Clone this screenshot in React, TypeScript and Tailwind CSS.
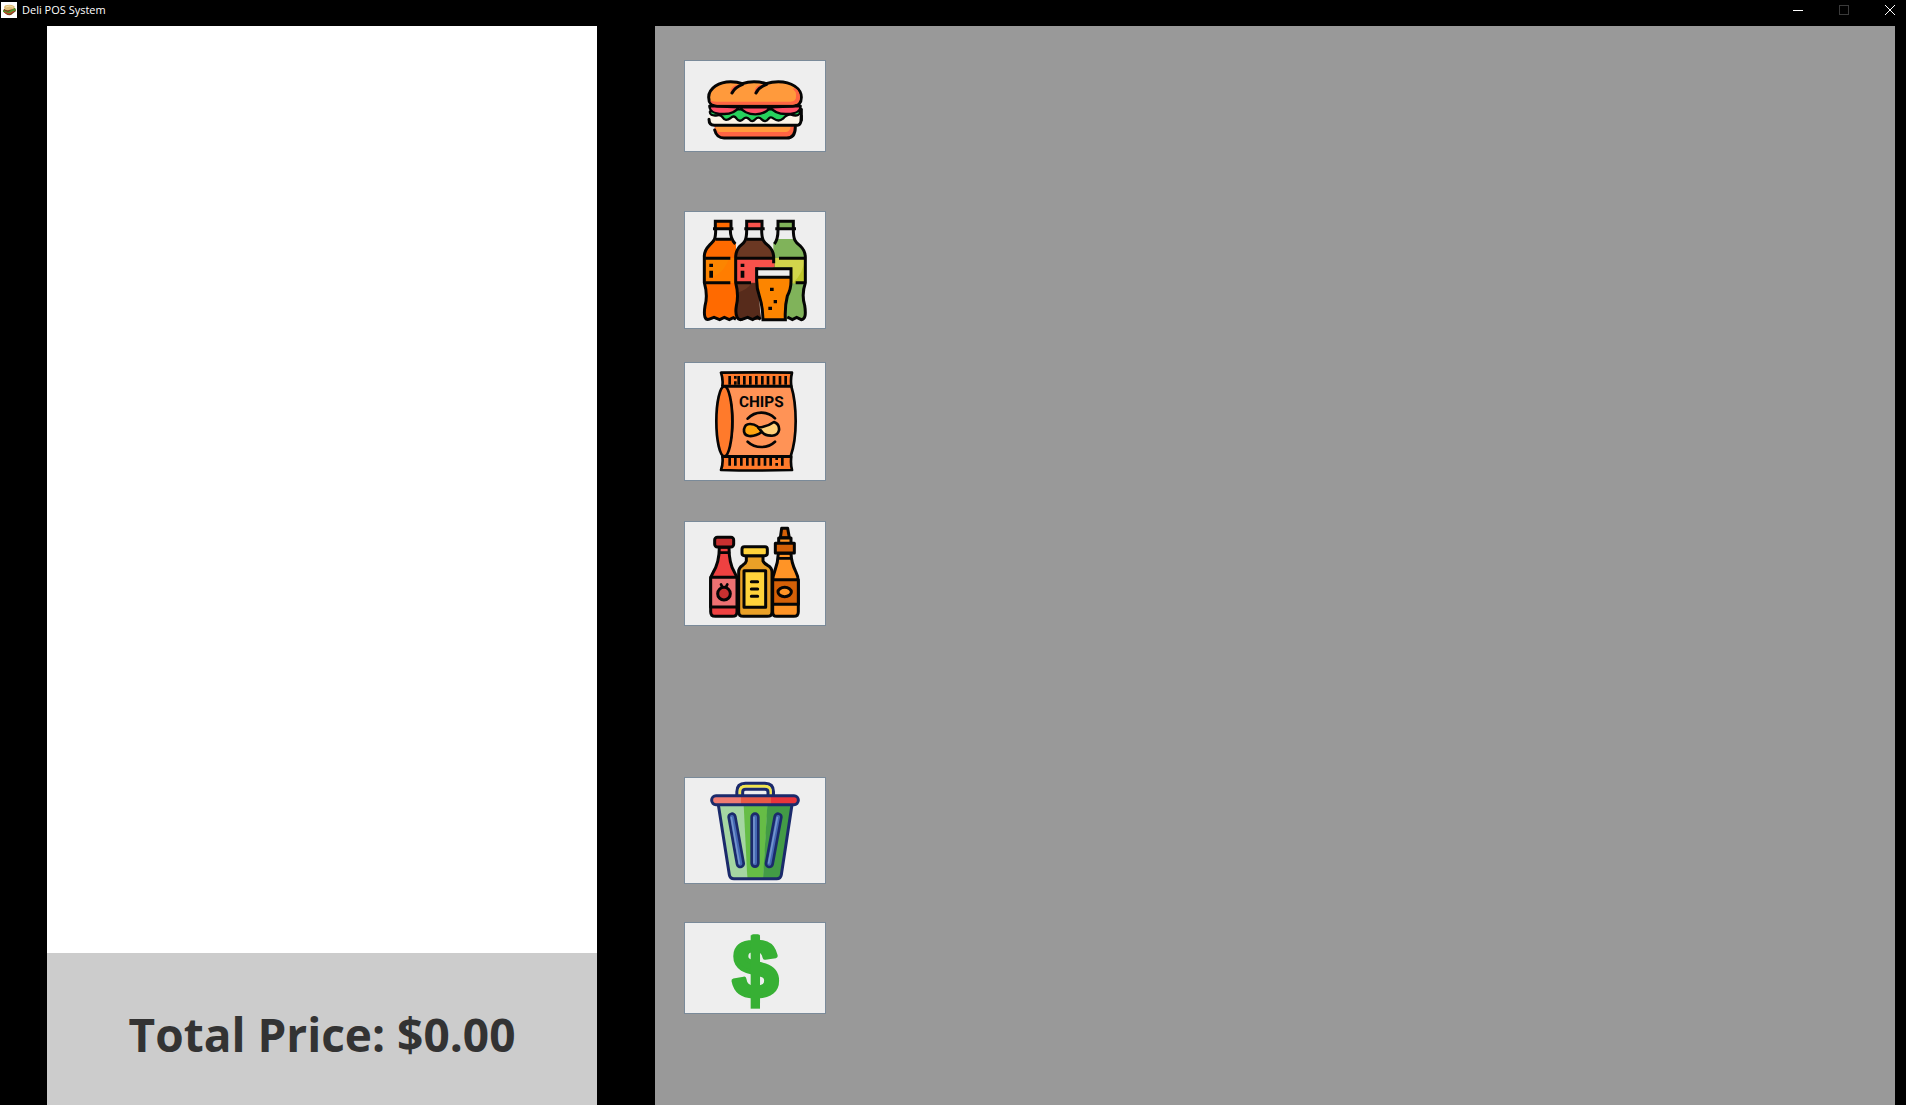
import type { ReactNode } from "react";

const INK = "#050505";
const NAVY = "#1b2a6b";

function SandwichIcon() {
  return (
    <svg viewBox="15 15 420 270" className="block h-[90px] w-full" aria-hidden="true">
      <g stroke={INK} strokeWidth="9" strokeLinecap="round" strokeLinejoin="round">
        <path d="M104 222C108 238 118 246 132 246H320C336 246 346 236 346 210H104Z" fill="#ff6443" stroke="none" />
        <path d="M106 210H332C331 222 326 228 314 228H120C112 228 107 220 106 210Z" fill="#ff9a3c" stroke="none" />
        <path d="M104 222C108 238 118 246 132 246H320C336 246 346 236 346 212" fill="none" />
        <path d="M87 178H364V194Q364 208 350 208H101Q87 208 87 192Z" fill="#fcf4e6" stroke="none" />
        <path d="M90 166C88 176 96 180 112 178Q121 174 128 184Q136 198 152 186Q162 176 170 188Q180 200 190 189Q198 180 208 190Q216 201 226 190Q235 180 245 190Q256 201 265 189Q272 180 281 188Q296 199 309 188Q321 174 333 176C352 182 362 176 360 166L330 160H120Z" fill="#27d15d" strokeWidth="7" />
        <path d="M87 190C87 202 91 208 103 208H348C360 208 364 202 364 180" fill="none" />
        <path d="M88 150C89 166 100 173 128 174C150 175 166 170 176 154Z" fill="#ff4f66" strokeWidth="7" />
        <path d="M362 150C361 166 350 173 322 174C300 175 282 170 272 154Z" fill="#ff4f66" strokeWidth="7" />
        <path d="M180 154Q194 174 226 175Q258 174 270 154Z" fill="#ff4f66" strokeWidth="7" />
        <path d="M364 160V192" fill="none" />
        <path d="M86 124C86 96 118 77 152 77Q172 77 187 83Q203 77 222 77Q242 77 258 83Q276 77 295 77C334 77 364 97 364 124Q364 150 338 150H112Q86 150 86 124Z" fill="#ff9a3c" />
        <path d="M90 132Q96 138 114 137H332Q350 135 348 118Q350 108 338 98Q345 94 353 103Q360 114 360 124Q360 146 338 146H112Q92 146 90 132Z" fill="#ff6443" stroke="none" />
        <path d="M186 86Q152 84 151 110L158 111Q165 97 187 86Z" fill="#ff6443" stroke="none" />
        <path d="M258 86Q224 84 223 110L230 111Q237 97 259 86Z" fill="#ff6443" stroke="none" />
        <path d="M156 111Q165 93 188 85M228 111Q237 93 260 85" fill="none" />
      </g>
    </svg>
  );
}

function DrinksIcon() {
  return (
    <svg viewBox="15 18 420 348" className="block h-[116px] w-full" aria-hidden="true">
      <path d="M107 68H152V94L168 114V340L160 334L148 343L133 333L119 343L102 333L86 342Q70 336 74 306Q84 268 76 232L74 152Q78 124 98 110Q107 100 107 90Z" fill="#ff6a00" />
      <rect x="76" y="156" width="90" height="74" fill="#fc8500" />
      <path d="M148 156H166V230H76V218Q128 212 148 156Z" fill="#ff7d00" />
      <path d="M294 68H341V94Q344 110 358 120Q376 132 376 152L371 236Q366 262 376 302Q380 340 364 342L350 334L338 340L318 340L316 250L280 184V112Q294 100 294 90Z" fill="#80b35a" />
      <path d="M284 156H374V232H336V184H284Z" fill="#d2d54b" />
      <path d="M374 156V232H338Q372 200 374 156Z" fill="#bfc62b" />
      <path d="M200 68H246V94Q250 110 266 120Q284 132 283 152V184H236L240 340L218 342L203 333L188 343Q168 346 168 306Q176 268 168 232V152Q170 128 190 114Q200 104 200 90Z" fill="#6b3823" />
      <path d="M168 156H283V184H226V230H168Z" fill="#f9524b" />
      <path d="M172 260Q202 252 214 232H228L244 340L218 342L203 333L188 343Q168 346 168 306Z" fill="#572b1b" />
      <g fill="#eee">
        <rect x="107" y="72" width="46" height="26" />
        <rect x="200" y="72" width="46" height="26" />
        <rect x="294" y="72" width="47" height="27" />
      </g>
      <g stroke={INK} strokeWidth="9" fill="none">
        <path d="M106 68V46H153V68" fill="#ff6a00" />
        <path d="M200 68V46H246V68" fill="#f9524b" />
        <path d="M294 68V46H340V68" fill="#80b35a" />
        <path d="M99 68H160M193 68H254M286 68H348" />
        <path d="M107 72C107 104 100 106 88 118Q72 134 73 154V230Q84 268 75 300C70 332 76 342 86 340L102 334L119 341L133 334L148 341L160 335L168 340" />
        <path d="M151 72Q151 98 166 114" />
        <path d="M200 72C200 106 192 110 180 120Q167 134 167 154V230Q177 268 169 300C164 332 174 344 186 340L203 334L218 341L232 333L242 340" />
        <path d="M245 72C245 106 254 110 266 120Q281 134 281 154V172" />
        <path d="M294 72Q294 100 283 114" />
        <path d="M340 72C340 106 349 110 361 120Q376 134 376 154V230Q364 266 374 298C379 330 374 340 364 341L350 334L337 341L322 333" />
        <path d="M107 100H153M200 100H247M76 157H151M170 157H281M297 157H374M76 230H151M170 230H213M347 230H374" />
      </g>
      <path d="M230 188H333V222Q334 248 322 270Q314 300 316 341H249Q248 300 238 270Q230 248 230 222Z" fill="#fc8500" />
      <path d="M230 188H333V214H230Z" fill="#eeeded" />
      <path d="M230 188H333V222Q334 248 322 270Q314 300 316 341H249Q248 300 238 270Q230 248 230 222ZM230 214H333" fill="none" stroke={INK} strokeWidth="9" />
      <path d="M88 173H99V183H88ZM88 194H99V215H88ZM182 173H193V183H182ZM182 194H193V215H182ZM270 245H281V255H270ZM281 282H291V292H281ZM265 302H276V312H265Z" fill={INK} />
    </svg>
  );
}

function ChipsIcon() {
  return (
    <svg viewBox="15 15 420 351" className="block h-[117px] w-full" aria-hidden="true">
      <g stroke={INK} strokeWidth="8" strokeLinejoin="round" strokeLinecap="round">
        <path d="M123 44Q230 42 336 44Q331 64 334 84H127Q130 64 123 44Z" fill="#ff7a2b" />
        <path d="M127 296H334Q331 316 336 336Q230 339 123 336Q130 316 127 296Z" fill="#ff7a2b" />
        <path d="M132 85H334Q347 128 347 190Q347 252 332 295H132Q157 260 157 190Q157 120 132 85Z" fill="#ff9356" />
        <ellipse cx="133" cy="190" rx="24" ry="105" fill="#ff7a2b" />
      </g>
      <g stroke={INK} strokeWidth="8" fill="none">
        <path d="M149 54V80M166 54V62M166 70V80M176 54V80M193 54V80M211 54V80M229 54V80M247 54V80M264 54V80M282 54V80M300 54V80M317 54V80" />
        <path d="M149 299V323M166 299V323M184 299V323M202 299V323M219 299V323M237 299V323M255 299V323M272 299V323M290 299V306M290 315V323M307 299V323" />
      </g>
      <text x="244" y="148" textAnchor="middle" fontFamily="Liberation Sans Narrow, Roboto, sans-serif" fontWeight="700" fontSize="46" textRendering="geometricPrecision" fill={INK}>CHIPS</text>
      <g stroke={INK} strokeWidth="8" strokeLinecap="round" strokeLinejoin="round">
        <path d="M203 182Q220 164 244 164Q268 164 285 181M203 251Q220 267 244 267Q268 267 285 251" fill="none" />
        <path d="M245 222Q226 236 207 234Q190 231 192 214Q195 197 211 198Q235 199 245 222Z" fill="#ffa50f" />
        <path d="M235 209Q263 206 282 192Q299 198 297 217Q293 235 272 233Q252 232 245 220Z" fill="#ffd079" />
      </g>
    </svg>
  );
}

function CondimentsIcon() {
  return (
    <svg viewBox="15 18 420 309" className="block h-[103px] w-full" aria-hidden="true">
      <g stroke={INK} strokeWidth="9" strokeLinejoin="round" strokeLinecap="round">
        <path d="M118 94H147Q147 144 164 170Q171 180 171 194V287Q171 301 157 301H106Q92 301 92 287V194Q92 180 99 170Q118 140 118 94Z" fill="#ee4141" />
        <path d="M92 184H171V273H92Z" fill="#ee7172" />
        <rect x="104" y="64" width="57" height="29" rx="8" fill="#c83030" />
        <path d="M119 110H147M123 205L128 215M142 205L137 215" fill="none" strokeWidth="8" />
        <circle cx="132" cy="233" r="19" fill="#c83030" />
        <path d="M199 119H249V135Q251 141 263 148Q276 155 276 168V287Q276 301 262 301H190Q176 301 176 287V168Q176 155 188 148Q198 141 199 135Z" fill="#e9a027" />
        <rect x="186" y="92" width="76" height="27" rx="7" fill="#ffd33b" />
        <rect x="192" y="164" width="65" height="110" fill="#ffd33b" />
        <path d="M214 197H233M214 219H233M214 241H233" fill="none" />
        <path d="M295 112H333Q334 140 347 166Q355 181 355 197V287Q355 301 341 301H290Q278 301 278 287V197Q278 181 284 166Q294 140 295 112Z" fill="#ff9426" />
        <path d="M278 191H355V265H278Z" fill="#d46007" />
        <path d="M305 37H323L328 65H301Z" fill="#d46007" />
        <path d="M296 66H333V84H296Z" fill="#ff9426" />
        <path d="M286 82H343V111H286Z" fill="#d46007" />
        <path d="M298 127H332" fill="none" strokeWidth="8" />
        <ellipse cx="314" cy="228" rx="20" ry="14" fill="#ff9426" />
      </g>
    </svg>
  );
}

function TrashIcon() {
  return (
    <svg viewBox="15 18 420 315" className="block h-[105px] w-full" aria-hidden="true">
      <path d="M171 72V59Q171 34 196 34H255Q280 34 280 59V72" fill="none" stroke={NAVY} strokeWidth="10" />
      <path d="M180 70V60Q180 43 197 43H254Q271 43 271 60V70" fill="none" stroke="#f0e44c" strokeWidth="9" />
      <path d="M188 70V60Q188 52 197 52H254Q264 52 264 60V70" fill="none" stroke={NAVY} strokeWidth="9" />
      <path d="M115 98H198L202 320H162Q150 320 148 308Z" fill="#a5d6a2" />
      <path d="M191 98H263L250 320H202Z" fill="#66bd46" />
      <path d="M262 98H336L304 308Q302 320 290 320H249Z" fill="#439b46" />
      <path d="M115 98L148 308Q150 320 162 320H290Q302 320 304 308L336 98" fill="none" stroke={NAVY} strokeWidth="9" />
      <path d="M111 71H181V98H111Q95 96 95 84Q95 71 111 71Z" fill="#f17c72" />
      <path d="M181 71H273V98H181Z" fill="#e95a46" />
      <path d="M273 71H341Q356 73 356 84Q356 96 341 98H273Z" fill="#ea353a" />
      <rect x="95" y="71" width="260" height="27" rx="13" fill="none" stroke={NAVY} strokeWidth="9" />
      <g strokeLinecap="round" fill="none">
        <path d="M156 135L181 275M225 135V274M294 135L268 275" stroke={NAVY} strokeWidth="28" />
        <path d="M156 135L181 275M225 135V274M294 135L268 275" stroke="#4569b4" strokeWidth="12" />
        <path d="M154 137L178 275M222 136V273M292 137L266 273" stroke="#7596cd" strokeWidth="5" />
      </g>
    </svg>
  );
}

function DollarIcon() {
  return (
    <svg viewBox="15 15 420 270" className="block h-[90px] w-full overflow-visible" aria-hidden="true">
      <text x="226" y="238" textAnchor="middle" fontFamily="Liberation Sans, sans-serif" fontWeight="700" fontSize="244" textRendering="geometricPrecision" fill="#37b034" stroke="#37b034" strokeWidth="14" strokeLinejoin="round">$</text>
      <path d="M212 52H240V272H212Z" fill="#37b034" />
    </svg>
  );
}

function AppIcon() {
  return (
    <svg viewBox="0 0 16 16" className="size-4" aria-hidden="true">
      <path d="M0 0H16V16H0Z" fill="#fff" />
      <path d="M2 9Q5 14 10 13L15 9L14 6L3 7Z" fill="#7b3f1c" />
      <path d="M2 8L7 10L14 6L15 8L9 12L2 10Z" fill="#4f9a2e" />
      <path d="M3 10L8 12L13 9" fill="none" stroke="#c8402b" />
      <path d="M3 6Q3 3 6 3Q10 2 13 4Q15 5 12 7L8 8Q4 9 3 6Z" fill="#dfbd76" />
      <path d="M5 5Q8 3 12 5" fill="none" stroke="#f1dca8" />
    </svg>
  );
}

function PosButton({ label, className, children }: { label: string; className: string; children: ReactNode }) {
  return (
    <button type="button" aria-label={label} className={`w-[142px] shrink-0 border border-[#7a8a99] bg-[#eeeeee] ${className}`}>
      {children}
    </button>
  );
}

export default function App() {
  return (
    <div className="flex min-h-screen flex-col bg-black font-['Open_Sans','Noto_Sans',sans-serif]">
      <header className="flex h-[26px] items-start justify-between text-white">
        <div className="flex items-center gap-[5px] pt-0.5 pl-px">
          <AppIcon />
          <h1 className="text-[11px] leading-4">Deli POS System</h1>
        </div>
        <div className="flex h-5 gap-[14px]">
          <button type="button" aria-label="Minimize" className="flex w-8 items-center justify-center">
            <svg viewBox="0 0 10 10" className="size-[10px]" shapeRendering="crispEdges"><path d="M0 5H10V6H0Z" fill="#fff" /></svg>
          </button>
          <button type="button" aria-label="Maximize" disabled className="flex w-8 items-center justify-center">
            <svg viewBox="0 0 10 10" className="size-[10px]" shapeRendering="crispEdges"><path d="M0 0H10V10H0ZM1 1V9H9V1Z" fill="#3a3a3a" fillRule="evenodd" /></svg>
          </button>
          <button type="button" aria-label="Close" className="flex w-8 items-center justify-center">
            <svg viewBox="0 0 10 10" className="size-[10px]"><path d="M0 0L10 10M10 0L0 10" stroke="#fff" fill="none" /></svg>
          </button>
        </div>
      </header>
      <div className="flex flex-1 gap-[58px] pr-[11px] pl-[47px]">
        <section aria-label="Order" className="flex flex-[550] flex-col bg-white">
          <div className="flex-1" />
          <div className="flex h-[152px] items-center justify-center bg-[#cccccc] pt-2.5">
            <p className="text-[46px] leading-none font-bold whitespace-nowrap text-[#333333]">Total Price: $0.00</p>
          </div>
        </section>
        <main className="flex-[1240] bg-[#999999]">
          <div className="flex flex-col items-start pt-[34px] pl-[29px]">
            <PosButton label="Sandwiches" className=""><SandwichIcon /></PosButton>
            <PosButton label="Drinks" className="mt-[59px]"><DrinksIcon /></PosButton>
            <PosButton label="Chips" className="mt-[33px]"><ChipsIcon /></PosButton>
            <PosButton label="Condiments" className="mt-10"><CondimentsIcon /></PosButton>
            <PosButton label="Clear order" className="mt-[151px]"><TrashIcon /></PosButton>
            <PosButton label="Pay" className="mt-[38px]"><DollarIcon /></PosButton>
          </div>
        </main>
      </div>
    </div>
  );
}
